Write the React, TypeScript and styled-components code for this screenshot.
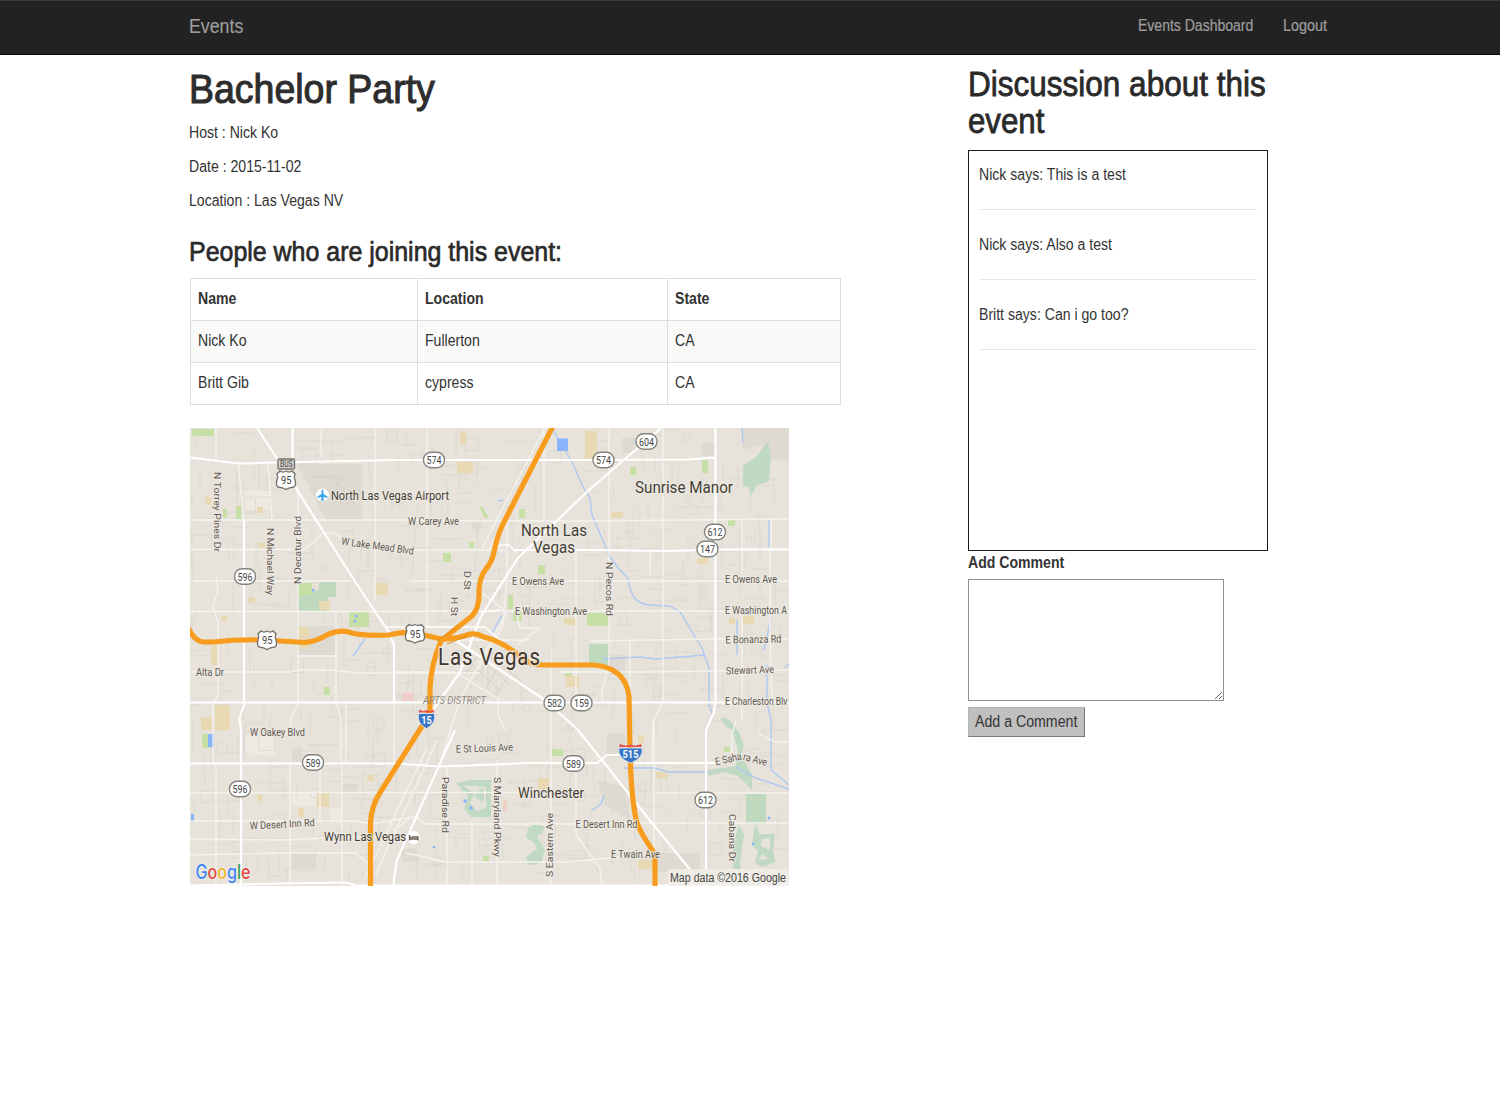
import React from "react";
import styled, { createGlobalStyle } from "styled-components";

const Global = createGlobalStyle`
  *, *::before, *::after { box-sizing: border-box; }
  body {
    margin: 0;
    background: #fff;
    color: #333;
    font-family: "Liberation Sans", Arial, sans-serif;
    font-size: 16px;
    line-height: 23px;
  }
`;

/* Horizontally condensed run of text */
const Narrow = styled.span<{ $x?: number }>`
  display: inline-block;
  white-space: nowrap;
  transform: scaleX(${(p) => p.$x ?? 0.88});
  transform-origin: left center;
`;

const NavBar = styled.nav`
  display: flex;
  justify-content: space-between;
  height: 54.5px;
  padding-left: 189px;
  background: #222;
  border-top: 1px solid #3b3b3b;
  border-bottom: 1.5px solid #080808;
  color: #9d9d9d;
  -webkit-text-stroke: 0.2px #9d9d9d;
`;
const Brand = styled.a`
  font-size: 20.6px;
  line-height: 50px;
`;
const Links = styled.div`
  display: flex;
  width: 362px;
  line-height: 50px;
`;
const NavLink = styled.a<{ $w: number }>`
  width: ${(p) => p.$w}px;
`;

const Main = styled.main`
  display: flex;
  align-items: flex-start;
  padding-left: 189px;
`;
const EventColumn = styled.section`
  width: 652px;
  padding-top: 12px;
`;
const Title = styled.h1`
  margin: 0 0 9px;
  font-size: 41.2px;
  line-height: 45px;
  font-weight: 400;
  color: #2d2d2d;
  -webkit-text-stroke: 1.1px #2d2d2d;
`;
const Detail = styled.p`
  margin: 0 0 11.4px;
`;
const Subtitle = styled.h3`
  margin: 25px 0 11px;
  font-size: 27.5px;
  line-height: 30px;
  font-weight: 400;
  color: #2a2a2a;
  -webkit-text-stroke: 0.7px #2a2a2a;
`;
const Table = styled.table`
  width: 651px;
  margin-left: 1px;
  table-layout: fixed;
  border-collapse: collapse;
  border: 1px solid #ddd;
`;
const Row = styled.tr<{ $shade?: boolean }>`
  height: 42px;
  background: ${(p) => (p.$shade ? "#f9f9f8" : "#fff")};
`;
const Head = styled.th<{ $w: number }>`
  width: ${(p) => p.$w}px;
  padding: 0 7px 2px;
  text-align: left;
  border: 1px solid #ddd;
`;
const Cell = styled.td`
  padding: 0 7px 2px;
  border: 1px solid #ddd;
`;
const MapSvg = styled.svg`
  display: block;
  width: 599px;
  height: 458px;
  margin: 23px 0 0 1px;
  font-family: Roboto, sans-serif;
`;

const Discussion = styled.aside`
  width: 300px;
  margin-left: 127px;
  padding-top: 11px;
`;
const DiscussionTitle = styled.h2`
  display: flex;
  flex-direction: column;
  margin: 0 0 9.5px;
  font-size: 34.35px;
  line-height: 37.4px;
  font-weight: 400;
  color: #2a2a2a;
  -webkit-text-stroke: 0.8px #2a2a2a;
`;
const Messages = styled.div`
  height: 401px;
  padding: 12px 10px 0;
  border: 1.5px solid #1c1c1c;
`;
const Message = styled.p`
  height: 47px;
  margin: 0 0 23px;
  border-bottom: 1.5px solid #e8e8e8;
`;
const Label = styled.label`
  display: block;
  height: 28px;
  font-weight: 700;
`;
const CommentBox = styled.textarea`
  display: block;
  width: 256px;
  height: 122px;
  margin: 0;
  border: 1px solid #8f8f8f;
  border-radius: 0;
  background: #fff;
  resize: both;
`;
const Submit = styled.button`
  display: block;
  width: 117px;
  height: 30px;
  margin-top: 6px;
  padding: 0 0 0 6px;
  overflow: hidden;
  text-align: left;
  font: 16px/28px "Liberation Sans", Arial, sans-serif;
  color: #333;
  background: #c0c0c0;
  border: 1px solid;
  border-color: #b4b4b4 #777 #777 #b4b4b4;
  border-radius: 0;
`;

type MapLabel = [text: string, x: number, y: number, width: number, size?: number, rotate?: number, color?: string];

const STREET = "#5f584e";
const LABELS: MapLabel[] = [
  ["North Las Vegas Airport", 331, 499.7, 118, 13],
  ["W Carey Ave", 408, 524.5, 51, 10.5, 0, STREET],
  ["W Lake Mead Blvd", 341, 544.5, 73, 10.5, 8, STREET],
  ["Sunrise Manor", 635, 493.2, 98, 17],
  ["North Las", 521, 536, 66, 17],
  ["Vegas", 533, 553, 42, 17],
  ["E Owens Ave", 512, 585, 52, 10.5, 0, STREET],
  ["E Washington Ave", 515, 615, 72, 10.5, 0, STREET],
  ["E Owens Ave", 725, 582.5, 52, 10.5, 0, STREET],
  ["E Washington A", 725, 613.5, 62, 10.5, 0, STREET],
  ["E Bonanza Rd", 725.5, 643.5, 56, 10.5, -1, STREET],
  ["Stewart Ave", 726, 674.5, 48, 10.5, -2, STREET],
  ["E Charleston Blv", 725, 705, 62.5, 10.5, 0, STREET],
  ["Alta Dr", 196, 675.7, 28, 10.5, 0, STREET],
  ["W Oakey Blvd", 250, 736, 55, 10.5, 0, STREET],
  ["E St Louis Ave", 456, 752.7, 57, 10.5, -2, STREET],
  ["Winchester", 518, 798.3, 66, 15.5],
  ["W Desert Inn Rd", 250, 829.5, 65, 10.5, -3, STREET],
  ["Wynn Las Vegas", 324, 841.3, 82, 13],
  ["E Desert Inn Rd", 575.5, 827.5, 62, 10.5, 0, STREET],
  ["E Twain Ave", 611, 857.5, 49, 10.5, 0, STREET],
  ["E Saha", 716, 765.5, 27, 10.5, -13, STREET],
  ["ra Ave", 742.5, 759.7, 24.5, 10.5, 15, STREET],
  ["N Torrey Pines Dr", 213.5, 472, 80, 9.5, 90, STREET],
  ["N Michael Way", 266.5, 528, 67, 9.5, 90, STREET],
  ["N Decatur Blvd", 300.5, 584, 68, 9.5, -90, STREET],
  ["N Pecos Rd", 606, 562, 54, 9.5, 90, STREET],
  ["D St", 464, 571, 19, 9.5, 90, STREET],
  ["H St", 451, 597, 19, 9.5, 90, STREET],
  ["Paradise Rd", 442, 777, 56, 9.5, 90, STREET],
  ["S Maryland Pkwy", 494, 777, 80, 9.5, 90, STREET],
  ["S Eastern Ave", 553, 877, 64, 9.5, -90, STREET],
  ["Cabana Dr", 729, 814, 48, 9.5, 90, STREET],
];

const SHIELDS: [string, number, number][] = [
  ["574", 434, 460], ["574", 603.5, 460], ["604", 646.5, 441.5], ["612", 715, 532],
  ["147", 707.5, 549], ["596", 245, 576.5], ["582", 554.5, 703], ["159", 581.5, 703],
  ["589", 313, 762.5], ["596", 240, 789], ["589", 573.5, 763.5], ["612", 705.5, 800],
];

const US_SHIELDS: [number, number][] = [[286, 480], [267, 640], [415, 633.5]];

const MAJOR = [
  "M190 457.500L238 463.500L277 462.500L394 460H594L689 459.500L715 457.500",
  "M257 428L280 463L354 580L388 631L394 645V702",
  "M292.500 428V458M244 520V705L239.500 718L241 730V886",
  "M190 702.500H789",
  "M190 763.500H395L440 766.500L530 763H597L607 755H630",
  "M635 763H720",
  "M715.500 428V700L714 712L706 730V886",
  "M661 428L589 490L518 558L507 575L480 618L460 672L430 714",
  "M515 550H590L670 551L715 549.500H789",
  "M455 640L545 700L578 730L652 823L692 872",
  "M455 730L397 860L393 886",
  "M190 885.500L280 883.500L346 882.500L356 885.500H789",
];

const MEDIUM = [
  "M190 520H400L480 521H586L789 519", "M190 549.500H305L322 534L332 532L345 540M380 550H505",
  "M190 611.500H394L478 611H789", "M190 672H290L300 670H330L360 673H480M560 672H640L789 670",
  "M238 463L244 520M268 463L272 520M298 488V704L291 717V732M216 428V460",
  "M336 611V702L341 717V762", "M427 428V628M375 428V600M321 430V458",
  "M544 428V520M507 520V577L503 625L478 670", "M609 428V665L602 690V702",
  "M663 428V700L653 722L652 763", "M576 550V702", "M742 520V580M742 611V720",
  "M771 519V549M650 550V575", "M190 581H350M410 581H789", "M440 640H530M590 641L715 639H789",
  "M297 656H336M394 672H455L500 700", "M346 702V763", "M394 702V763",
  "M190 793H240L340 792.500H540M655 793H789", "M190 821H355L373 824L415 816L425 824H570L640 823H789",
  "M190 839L280 840L350 837H410M190 855L280 853H355L370 865M405 853L425 857L445 862H570L660 853",
  "M216 763V886M290 763V886M342 763V886M320 763V820", "M447 767V886M472 820V886M497 760V886",
  "M551 650V886M576 763V835L600 868L602 886", "M654 720V886M630 640V700",
  "M216 577L218 590L213 606L218 622V695L213 705V763", "M478 590L507 612L460 700L440 763",
  "M517 645L540 628H520L517 615M498 698V715L505 730",
  "M545 428L482 548M550 428L488 552", "M427 748L365 878M437 740L375 876M394 830L410 818",
  "M736 720L732 735V760M758 733L775 742H789", "M770 549V640L772 700",
];

const FINE: string[] = (() => {
  const out: string[] = [];
  let seed = 17;
  const rnd = () => {
    seed = (seed * 16807) % 2147483647;
    return seed / 2147483647;
  };
  for (let i = 0; i < 750; i++) {
    const x = 190 + Math.floor(rnd() * 590);
    const y = 430 + Math.floor(rnd() * 448);
    if (x > 300 && x < 362 && y > 462 && y < 520) continue;
    const len = 8 + Math.floor(rnd() * 24);
    const k = rnd();
    out.push(k < 0.46 ? `M${x} ${y}v${len}` : k < 0.92 ? `M${x} ${y}h${len}` : `M${x} ${y}h${len / 2}v${len / 2}h${-len / 2}z`);
  }
  return out;
})();

const GREEN = "#c5dfa4";
const SAGE = "#bfd9bf";
const TAN = "#e8d9b3";
const PINK = "#efcfc8";
const BLOCKS: [number, number, number, number, string][] = [
  [192, 429, 22, 7, GREEN], [223, 509, 4, 9, GREEN], [236, 506, 5, 13, GREEN],
  [319, 582, 17, 15, SAGE], [298, 591, 30, 20, SAGE], [298, 583, 14, 12, GREEN],
  [349, 612, 20, 15, GREEN], [324, 687, 6, 8, GREEN],
  [519, 509, 6, 9, GREEN], [469, 542, 5, 6, GREEN], [443, 553, 8, 9, GREEN],
  [538, 565, 7, 9, GREEN], [630, 467, 6, 8, GREEN], [702, 460, 6, 13, GREEN],
  [728, 520, 7, 6, GREEN], [587, 613, 22, 13, GREEN], [589, 644, 20, 22, SAGE],
  [513, 611, 9, 10, GREEN], [508, 595, 5, 14, GREEN], [202, 734, 8, 14, GREEN],
  [552, 749, 11, 7, GREEN], [565, 673, 7, 4, GREEN], [724, 747, 6, 5, GREEN],
  [746, 794, 20, 30, SAGE], [483, 856, 6, 6, GREEN],
  [205, 497, 6, 8, TAN], [257, 507, 6, 6, TAN], [258, 543, 7, 5, TAN], [248, 597, 7, 6, TAN],
  [221, 616, 6, 5, TAN], [457, 462, 16, 11, TAN], [460, 431, 6, 13, TAN], [585, 431, 12, 28, TAN],
  [611, 512, 12, 6, TAN], [319, 601, 11, 9, TAN], [376, 583, 12, 12, TAN], [211, 645, 6, 20, TAN],
  [298, 627, 11, 22, TAN], [215, 705, 15, 25, TAN], [201, 717, 11, 13, TAN], [317, 793, 12, 14, TAN],
  [298, 808, 6, 9, TAN], [564, 618, 12, 7, TAN], [729, 618, 6, 6, TAN], [743, 616, 11, 8, TAN],
  [538, 778, 11, 11, TAN], [638, 735, 6, 8, TAN], [656, 772, 11, 6, TAN], [638, 860, 15, 9, TAN],
  [566, 676, 13, 11, TAN], [697, 558, 11, 6, TAN], [402, 693, 12, 8, PINK], [367, 775, 7, 6, TAN],
  [257, 795, 5, 6, TAN], [503, 800, 4, 12, PINK],
];

function StateShield({ n, x, y }: { n: string; x: number; y: number }) {
  return (
    <g>
      <rect x={x - 10.5} y={y - 7.8} width="21" height="15.600" rx="7.500" fill="#fff" stroke="#85837e" strokeWidth="1.400" />
      <text x={x - 7.5} y={y + 4} fontSize="11" textLength="15" lengthAdjust="spacingAndGlyphs" fill="#444">{n}</text>
    </g>
  );
}

function UsShield({ x, y }: { x: number; y: number }) {
  return (
    <g transform={`translate(${x} ${y})`}>
      <path d="M-6 -9Q-3 -7 0 -9Q3 -7 6 -9L9 -6Q7.500 -3 9 0Q10.500 5 8 7Q3 7.500 0 9.500Q-3 7.500 -8 7Q-10.500 5 -9 0Q-7.500 -3 -9 -6Z" fill="#fff" stroke="#77746f" strokeWidth="1.400" />
      <text x="-5" y="4" fontSize="11.500" textLength="10.500" lengthAdjust="spacingAndGlyphs" fill="#444">95</text>
    </g>
  );
}

function Interstate({ n, x, y, w }: { n: string; x: number; y: number; w: number }) {
  return (
    <g transform={`translate(${x} ${y})`}>
      <path d={`M${-w} -5Q${-w - 2} 5 0 10Q${w + 2} 5 ${w} -5Z`} fill="#3674c5" stroke="#eee" strokeWidth=".8" />
      <path d={`M${-w + 1} -9Q${-w / 2} -6.500 0 -8.500Q${w / 2} -6.500 ${w - 1} -9L${w} -6H${-w}Z`} fill="#e0564f" />
      <text x={-(n.length * 2.65)} y="5" fontSize="11" fontWeight="700" textLength={n.length * 5.3} lengthAdjust="spacingAndGlyphs" fill="#fff">{n}</text>
    </g>
  );
}

const FREEWAYS = [
  "M553 426L502 526Q497 537 494 552Q492 562 486 569Q479 578 479 591Q480 607 472 616L458 627L441 641Q431 664 430 688V710Q426 721 417 734L381 791Q370.500 807 370.500 824V888",
  "M188 628Q195 642 204 642H213Q240 639 265 640L305 642.500Q315 642 329 634Q341 629 352 633Q362 636 389 635Q403 631 415 633L441 639Q456 639 467 635Q475 632 484 637Q503 642 518 655Q530 665 542 665H593Q625 667 629 696L630 750Q631 795 636 819Q638 829 651 848Q655 853 655 863V888",
];

function CityMap() {
  return (
    <MapSvg viewBox="190 428 599 458" preserveAspectRatio="none" role="img" aria-label="Las Vegas">
      <rect x="190" y="428" width="599" height="458" fill="#e7e3db" />
      <g fill="#dedad2">
        <path d="M297 464H362V520H326Z" />
        <path d="M742 428H789V461L770 460L762 445L742 450Z" />
        <rect x="623" y="438" width="12" height="15" /><rect x="702" y="443" width="13" height="13" />
        <path d="M470 522H482L477 535ZM298 626H335V655H298ZM342 784H358V792H342Z" />
        <rect x="292" y="853" width="24" height="16" /><rect x="292" y="748" width="10" height="14" />
        <path d="M607 733H625V757H607ZM597 780L625 787L630 820L605 805ZM655 853H700V872H655ZM400 850L415 848L420 862L403 862ZM609 655H625V675H609Z" />
      </g>
      <g fill="#eeeae3">
        <rect x="292" y="792" width="24" height="14" /><rect x="330" y="808" width="12" height="14" />
        <rect x="245" y="733" width="30" height="22" /><rect x="245" y="490" width="24" height="20" />
      </g>
      <path d={FINE.join("")} fill="none" stroke="#dbd7ce" strokeWidth=".8" />
      <path d="M308 477H346L336 484M318 480L350 512M330 474L356 506M455 650L500 690M465 645L510 685M475 645L520 680M485 690L505 655M475 680L495 650M465 675L485 645M495 697L515 665" stroke="#d5d1c8" strokeWidth="1" fill="none" />
      {BLOCKS.map(([x, y, w, h, c], i) => (
        <rect key={i} x={x} y={y} width={w} height={h} fill={c} />
      ))}
      <g fill="#bfd9c2">
        <path d="M743 466L757 456L768 441L771 456L769 481L757 485L751 496L749 487L743 486Z" />
        <path d="M720 719Q727 716 733 724L738 732L728 728ZM732 730H738L744 745L741 755L752 775V790L738 776L724 772L708 776L709 770L736 766L738 750Z" />
        <path d="M528 828L535 824L545 827L542 833L537 836L545 850L541 863L529 865L526 857L537 849L534 843L526 837Z" />
        <path fillRule="evenodd" d="M456 783L471 780H491V817H471L464 808L468 796ZM463 785L474 794L470 803L476 811L486 808V787Z" />
        <path d="M474 796L480 789H484V802L478 799Z" />
        <path d="M739 825L744 835L740 860L741 876L733 868V845Z" />
        <path fillRule="evenodd" d="M755 824L760 834H775L773 850L775 862L762 867L755 863L758 851L752 845ZM762 839L761 846L770 850V838ZM762 854L758 860L769 859Z" />
      </g>
      <g fill="none" stroke="#adc9f3" strokeWidth="1.400">
        <path d="M553 430L572 462L583 487L590 498L592 515L609 555L618 568L628 578L630 588Q634 604 650 605L670 606L680 612L702 648L709 668V704L713 716" />
        <path d="M603 659L640 657L656 659L705 655M353 656L365 639M492 633L496 626L502 615M498 501L503 500M742 428L743 442M769 520V547M789 664L785 668M771 618L764 650M737 620V655M767 665V703L771 720V770L789 785M736 767L756 778L789 789M624 768H655L668 772H710M591 811L601 804L604 795" />
      </g>
      <g fill="#89b4fb">
        <rect x="557" y="438.500" width="11" height="12.500" /><rect x="208" y="734" width="6" height="13" />
        <rect x="191" y="814" width="3" height="8" /><circle cx="465" cy="801" r="1.800" /><circle cx="471" cy="808" r="1.800" />
        <circle cx="313" cy="590" r="1.500" /><circle cx="356" cy="616" r="1.500" /><circle cx="355" cy="621" r="1.500" />
        <circle cx="434" cy="847" r="1.300" /><circle cx="769" cy="818" r="1.400" /><circle cx="753" cy="844" r="1.400" />
      </g>
      <path d="M481 507L484 513L487 518" stroke={GREEN} strokeWidth="3" fill="none" />
      <path d={MEDIUM.join("")} fill="none" stroke="#f5f3ee" strokeWidth="1.300" />
      <path d={MAJOR.join("")} fill="none" stroke="#fff" strokeWidth="2.200" strokeLinejoin="round" />
      <path d="M495 549L501 545H509L516 552M480 612L500 610M425 627H485L500 640M385 627H420" fill="none" stroke="#fff" strokeWidth="1.600" />
      {FREEWAYS.map((d) => (
        <path key={d} d={d} fill="none" stroke="#f79c1d" strokeWidth="5.200" strokeLinejoin="round" />
      ))}
      <path d="M438 640L455 629M447 644L467 636" stroke="#e98c12" strokeWidth="1" />
      {LABELS.map(([t, x, y, w, size = 10.5, rot = 0, color = "#453e35"], i) => (
        <text key={i} x={x} y={y} fontSize={size} textLength={w} lengthAdjust="spacingAndGlyphs" transform={`rotate(${rot} ${x} ${y})`}
          fill={color} stroke="#eeebe5" strokeOpacity=".85" strokeWidth="2.200" strokeLinejoin="round" paintOrder="stroke">{t}</text>
      ))}
      <text x="0" y="665.500" fontSize="24" textLength="120" lengthAdjust="spacing" transform="translate(438 0) scale(.85 1)"
        fill="#40352d" stroke="#eeebe5" strokeOpacity=".8" strokeWidth="3" paintOrder="stroke">Las Vegas</text>
      <text x="423" y="704" fontSize="10" fontStyle="italic" textLength="63" lengthAdjust="spacingAndGlyphs" fill="#8f897f">ARTS DISTRICT</text>
      {SHIELDS.map(([n, x, y], i) => <StateShield key={i} n={n} x={x} y={y} />)}
      <rect x="278" y="459" width="16.500" height="10" rx="1" fill="#d4d1cc" stroke="#77746f" strokeWidth="1.400" />
      <text x="280" y="467.200" fontSize="8.500" textLength="12.500" lengthAdjust="spacingAndGlyphs" fill="#444">BUS</text>
      {US_SHIELDS.map(([x, y]) => <UsShield key={x} x={x} y={y} />)}
      <Interstate n="15" x={426.5} y={718.5} w={8} />
      <Interstate n="515" x={630.5} y={753} w={11.5} />
      <circle cx="322.500" cy="495" r="6.500" fill="#fff" />
      <path d="M322.500 489.500Q323.500 489.500 323.500 492V494L327.500 496.500V498L323.500 497V499L325 500.500H320L321.500 499V497L317.500 498V496.500L321.500 494V492Q321.500 489.500 322.500 489.500Z" fill="#3aa5e8" />
      <circle cx="413.500" cy="837.500" r="6.500" fill="#fff" />
      <path d="M409.500 835V840.500M409.500 839H418V840.500M412 837H418V839M411 836.500V839" stroke="#695f56" strokeWidth="1.300" fill="none" />
      <text x="195.500" y="879" fontFamily="Inter, sans-serif" fontSize="19.500" fontWeight="500" textLength="55" lengthAdjust="spacingAndGlyphs" paintOrder="stroke" stroke="#f4f2ee" strokeWidth="1.500">
        <tspan fill="#4285f4">G</tspan><tspan fill="#e14b3f">o</tspan><tspan fill="#f0b62a">o</tspan><tspan fill="#4285f4">g</tspan><tspan fill="#3b9c57">l</tspan><tspan fill="#e14b3f">e</tspan>
      </text>
      <rect x="668" y="869" width="121" height="17" fill="#f1eee9" opacity=".85" />
      <text x="670" y="881.500" fontFamily="Liberation Sans, Arial, sans-serif" fontSize="12.500" textLength="116" lengthAdjust="spacingAndGlyphs" fill="#444">Map data ©2016 Google</text>
    </MapSvg>
  );
}

const PEOPLE = [
  { name: "Nick Ko", city: "Fullerton", state: "CA" },
  { name: "Britt Gib", city: "cypress", state: "CA" },
];
const DETAILS = ["Host : Nick Ko", "Date : 2015-11-02", "Location : Las Vegas NV"];
const MESSAGES = ["Nick says: This is a test", "Nick says: Also a test", "Britt says: Can i go too?"];

export default function App() {
  return (
    <>
      <Global />
      <NavBar>
        <Brand><Narrow $x={0.862}>Events</Narrow></Brand>
        <Links>
          <NavLink $w={145}><Narrow $x={0.876}>Events Dashboard</Narrow></NavLink>
          <NavLink $w={60}><Narrow $x={0.9}>Logout</Narrow></NavLink>
        </Links>
      </NavBar>
      <Main>
        <EventColumn>
          <Title><Narrow $x={0.91}>Bachelor Party</Narrow></Title>
          {DETAILS.map((d) => <Detail key={d}><Narrow>{d}</Narrow></Detail>)}
          <Subtitle><Narrow $x={0.907}>People who are joining this event:</Narrow></Subtitle>
          <Table>
            <thead>
              <Row>
                <Head $w={227}><Narrow>Name</Narrow></Head>
                <Head $w={250}><Narrow>Location</Narrow></Head>
                <Head $w={173}><Narrow>State</Narrow></Head>
              </Row>
            </thead>
            <tbody>
              {PEOPLE.map((p, i) => (
                <Row key={p.name} $shade={i % 2 === 0}>
                  <Cell><Narrow>{p.name}</Narrow></Cell>
                  <Cell><Narrow>{p.city}</Narrow></Cell>
                  <Cell><Narrow>{p.state}</Narrow></Cell>
                </Row>
              ))}
            </tbody>
          </Table>
          <CityMap />
        </EventColumn>
        <Discussion>
          <DiscussionTitle>
            <Narrow $x={0.918}>Discussion about this</Narrow>
            <Narrow $x={0.91}>event</Narrow>
          </DiscussionTitle>
          <Messages>
            {MESSAGES.map((m) => <Message key={m}><Narrow>{m}</Narrow></Message>)}
          </Messages>
          <Label htmlFor="comment"><Narrow>Add Comment</Narrow></Label>
          <CommentBox id="comment" />
          <Submit type="button"><Narrow $x={0.885}>Add a Comment</Narrow></Submit>
        </Discussion>
      </Main>
    </>
  );
}
